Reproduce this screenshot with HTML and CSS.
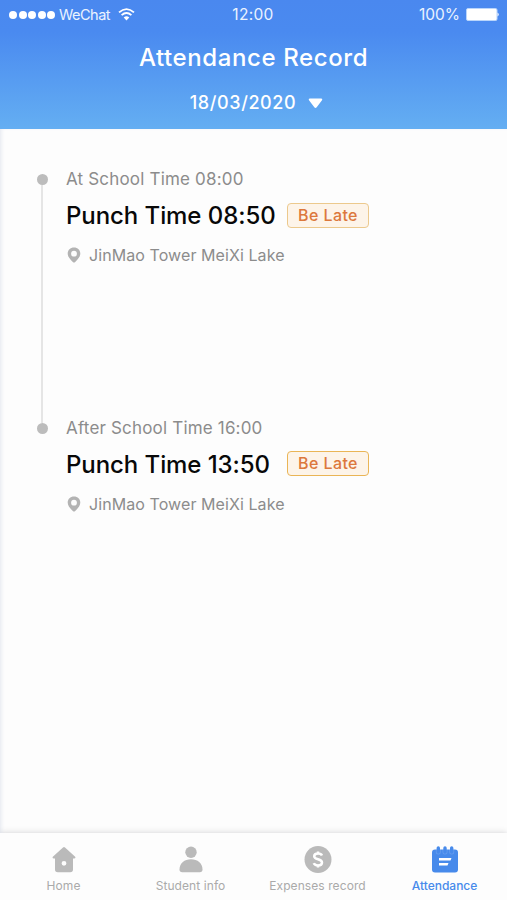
FILE: index.html
```html
<!DOCTYPE html>
<html lang="en">
<head>
<meta charset="utf-8">
<title>Attendance Record</title>
<link rel="stylesheet" href="styles.css">
</head>
<body>
<div class="app">
  <header class="header">
    <div class="status">
      <div class="carrier">
        <span class="signal"><i></i><i></i><i></i><i></i><i></i></span>
        <span class="carrier-name">WeChat</span>
        <svg class="wifi" width="17" height="13" viewBox="0 0 17 13" fill="none" stroke="#fff" stroke-width="1.8"><path d="M1 4.4Q8.5-2.2 16 4.4M3.6 7.2Q8.500 2.800 13.400 7.200"/><path d="M5.700 9.400Q8.500 6.900 11.300 9.400L8.500 12.400Z" fill="#fff" stroke="none"/></svg>
      </div>
      <span class="clock">12:00</span>
      <div class="power">
        <span class="percent">100%</span>
        <svg width="34" height="13" viewBox="0 0 34 13"><rect x=".5" y=".5" width="30.500" height="12" rx="1.500" fill="#fff" stroke="#b9d5fb"/><path d="M31.500 4.500Q34 6.500 31.500 8.500Z" fill="#fff"/></svg>
      </div>
    </div>
    <h1 class="title">Attendance Record</h1>
    <div class="date"><span class="date-text">18/03/2020</span><svg width="15" height="11" viewBox="0 0 15 11"><path d="M1.800.5H13.200Q15 .6 14 2.200L8.700 9.200Q7.500 10.800 6.300 9.200L1 2.200Q0 .6 1.800.5Z" fill="#fff"/></svg></div>
  </header>
  <main class="timeline">
    <section class="entry">
      <div class="rail"><span class="dot"></span><span class="line"></span></div>
      <div class="detail">
        <p class="label">At School Time 08:00</p>
        <div class="punch"><h2 class="time">Punch Time 08:50</h2><span class="tag">Be Late</span></div>
        <p class="place"><svg width="14" height="16" viewBox="0 0 14 16"><path fill-rule="evenodd" d="M7 .5C3.300.5.7 3.100.7 6.500C.7 9.800 3 12.100 5.800 14.900Q7 16 8.200 14.900C11 12.100 13.300 9.800 13.300 6.500C13.300 3.100 10.700.5 7 .5ZM7 3.800A2.900 2.900 0 1 1 7 9.600A2.900 2.900 0 1 1 7 3.800Z" fill="#b3b3b3"/></svg><span>JinMao Tower MeiXi Lake</span></p>
      </div>
    </section>
    <section class="entry">
      <div class="rail"><span class="dot"></span></div>
      <div class="detail">
        <p class="label">After School Time 16:00</p>
        <div class="punch"><h2 class="time">Punch Time 13:50</h2><span class="tag tag-strong">Be Late</span></div>
        <p class="place"><svg width="14" height="16" viewBox="0 0 14 16"><path fill-rule="evenodd" d="M7 .5C3.300.5.7 3.100.7 6.500C.7 9.800 3 12.100 5.800 14.900Q7 16 8.200 14.900C11 12.100 13.300 9.800 13.300 6.500C13.300 3.100 10.700.5 7 .5ZM7 3.800A2.900 2.900 0 1 1 7 9.600A2.900 2.900 0 1 1 7 3.800Z" fill="#b3b3b3"/></svg><span>JinMao Tower MeiXi Lake</span></p>
      </div>
    </section>
  </main>
  <nav class="tabs">
    <a class="tab home"><svg width="28" height="28" viewBox="0 0 28 28"><path fill-rule="evenodd" d="M13 1.400Q14 .5 15 1.400L25.200 10.700Q26.200 12.300 24.300 12.500H23V23.500Q23 26.300 20.200 26.300H7.800Q5 26.300 5 23.500V12.500H3.700Q1.800 12.300 2.800 10.700ZM14 14.900A2.400 2.400 0 1 0 14 19.700A2.400 2.400 0 1 0 14 14.900Z" fill="#bababa"/></svg><span>Home</span></a>
    <a class="tab student"><svg width="28" height="28" viewBox="0 0 28 28" fill="#bababa"><circle cx="14" cy="6.300" r="5.700"/><path d="M2.500 23.500C2.500 17 7.500 13.200 14 13.200S25.500 17 25.500 23.500Q25.500 26.300 22.800 26.300H5.200Q2.500 26.300 2.500 23.500Z"/></svg><span>Student info</span></a>
    <a class="tab expenses"><svg width="28" height="28" viewBox="0 0 28 28"><circle cx="14" cy="13.500" r="13.500" fill="#bababa"/><path d="M18 9.500C17.300 7.900 15.800 7.500 14 7.500C11.700 7.500 10.200 8.500 10.200 10.300C10.200 14.200 18 12.300 18 16.500C18 18.500 16.300 19.500 14 19.500C12 19.500 10.400 18.900 9.800 17.200M14 5.500V8M14 19V21.500" fill="none" stroke="#fff" stroke-width="2.500"/></svg><span>Expenses record</span></a>
    <a class="tab attendance active"><svg width="28" height="28" viewBox="0 0 28 28"><rect x="1" y="3.500" width="26" height="23" rx="3" fill="#478aeb"/><path d="M7.300 2V6M14 2V6M20.700 2V6" stroke="#fff" stroke-width="5" stroke-linecap="round" opacity=".15"/><path d="M7.300 2V6M14 2V6M20.700 2V6" stroke="#478aeb" stroke-width="3.400" stroke-linecap="round"/><path d="M8 12H20.500L19.500 14.400H8ZM8 17H17.500L16.500 19.400H8Z" fill="#fff"/></svg><span>Attendance</span></a>
  </nav>
</div>
</body>
</html>
```
FILE: styles.css
```css
* { box-sizing: border-box; }
body, h1, h2, p { margin: 0; }
body { font-family: Inter, "Liberation Sans", sans-serif; }
.app { width: 507px; height: 900px; display: flex; flex-direction: column; background: #fdfdfd; overflow: hidden; }
.header { height: 129px; flex: none; color: #fff; background: linear-gradient(#4a88ef 0, #4a8af0 32px, #64aef2 128px); }
.status { display: grid; grid-template-columns: 1fr auto 1fr; align-items: center; height: 29px; padding: 0 7px 0 9px; font-size: 15.500px; color: #eaf3ff; }
.carrier { display: flex; align-items: center; }
.signal { display: flex; gap: 1.500px; margin-right: 4px; }
.signal i { width: 8px; height: 8px; border-radius: 50%; background: #fff; }
.carrier-name { font-size: 14.500px; letter-spacing: -.5px; width: 52px; }
.wifi { margin-left: 7px; }
.clock { letter-spacing: .3px; margin-right: 3px; }
.power { display: flex; justify-content: flex-end; align-items: center; gap: 6px; }
.title { margin-top: 13px; line-height: 32px; font-size: 24px; font-weight: 450; letter-spacing: .6px; text-align: center; }
.date { display: flex; align-items: center; justify-content: center; gap: 12px; margin: 16px 0 0 6px; line-height: 26px; font-size: 18px; font-weight: 500; letter-spacing: .6px; }
.timeline { flex: 1; padding: 39px 0 0 36px; box-shadow: inset 3px 0 4px -2px #e3e6ef; }
.entry { display: flex; gap: 18px; height: 248.500px; }
.rail { width: 12px; display: flex; flex-direction: column; align-items: center; padding-top: 6px; }
.dot { width: 11px; height: 11px; border-radius: 50%; background: #bcbcbc; flex: none; }
.line { width: 2px; height: 238px; background: #e5e5e5; flex: none; }
.label { line-height: 23px; font-size: 17px; color: #8c8c8c; white-space: nowrap; letter-spacing: .18px; }
.punch { display: flex; align-items: center; height: 34px; margin-top: 8px; }
.time { font-size: 24px; line-height: 34px; font-weight: 500; color: #080808; width: 221px; white-space: nowrap; letter-spacing: -.07px; }
.tag { width: 82px; height: 25px; line-height: 23px; border: 1px solid #ecc98d; border-radius: 4px; background: #fdf4e9; color: #dc783c; font-size: 16px; font-weight: 500; text-align: center; letter-spacing: .4px; margin-top: -2px; }
.tag-strong { border: 1.500px solid #eab556; }
.place { display: flex; align-items: center; gap: 8px; height: 24px; margin: 10px 0 0 1px; font-size: 16px; color: #8c8c8c; white-space: nowrap; letter-spacing: .08px; }
.tabs { flex: none; height: 67px; display: grid; grid-template-columns: repeat(4, 127px); background: #fdfdfd; box-shadow: 0 -1px 6px rgba(0, 0, 0, .12); }
.tab { display: flex; flex-direction: column; align-items: center; padding-top: 13px; font-size: 12px; line-height: 16px; color: #aaa; white-space: nowrap; letter-spacing: .08px; }
.tab span { margin-top: 4px; }
.active { color: #478aeb; font-weight: 500; letter-spacing: 0; }
```
